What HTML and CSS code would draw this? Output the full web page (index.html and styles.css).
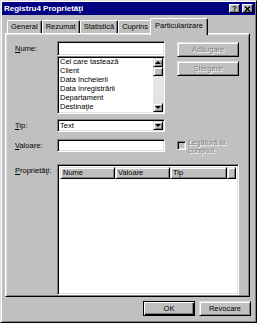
FILE: index.html
```html
<!DOCTYPE html>
<html lang="ro">
<head>
    <meta charset="utf-8">
    <title>Registru4 Proprietăţi</title>
    <link rel="stylesheet" href="styles.css">
</head>
<body>
<div class="window">
    <div class="titlebar">
        <span class="title">Registru4 Proprietăţi</span>
        <div class="title-buttons">
            <span class="tbtn">?</span>
            <span class="tbtn">
                <svg width="7" height="6" viewBox="0 0 7 6">
                    <path d="M1 0.5 L6 5.5 M6 0.5 L1 5.5" stroke="#000" stroke-width="1.5"/>
                </svg>
            </span>
        </div>
    </div>

    <div class="tabs">
        <span class="tab">General</span>
        <span class="tab">Rezumat</span>
        <span class="tab">Statistică</span>
        <span class="tab">Cuprins</span>
        <span class="tab active">Particularizare</span>
    </div>

    <div class="panel">
        <!-- Nume -->
        <div class="row">
            <span class="lbl lbl-15"><u>N</u>ume:</span>
            <div class="field-col">
                <div class="sunken input"></div>
                <div class="sunken listbox">
                    <ul class="items">
                        <li>Cel care tastează</li>
                        <li>Client</li>
                        <li>Data încheierii</li>
                        <li>Data înregistrării</li>
                        <li>Departament</li>
                        <li>Destinaţie</li>
                    </ul>
                    <div class="scrollbar">
                        <span class="raised sb-btn"><i class="arrow up"></i></span>
                        <span class="raised sb-thumb"></span>
                        <span class="sb-track"></span>
                        <span class="raised sb-btn"><i class="arrow down"></i></span>
                    </div>
                </div>
            </div>
            <div class="side-col">
                <button class="raised btn disabled">Adăugare</button>
                <button class="raised btn disabled">Ştergere</button>
            </div>
        </div>

        <!-- Tip -->
        <div class="row row-tip">
            <span class="lbl lbl-13"><u>T</u>ip:</span>
            <div class="field-col">
                <div class="sunken combo">
                    <span class="combo-text">Text</span>
                    <span class="raised drop"><i class="arrow down"></i></span>
                </div>
            </div>
        </div>

        <!-- Valoare -->
        <div class="row row-val">
            <span class="lbl lbl-13"><u>V</u>aloare:</span>
            <div class="field-col">
                <div class="sunken input small"></div>
            </div>
            <div class="side-col check-row">
                <span class="sunken checkbox"></span>
                <span class="disabled check-text">Legătură la conţinut</span>
            </div>
        </div>

        <!-- Proprietăţi -->
        <div class="row row-props">
            <span class="lbl lbl-14"><u>P</u>roprietăţi:</span>
            <div class="sunken listview">
                <div class="lv-head">
                    <span class="raised col col-name">Nume</span>
                    <span class="raised col col-val">Valoare</span>
                    <span class="raised col col-type">Tip</span>
                    <span class="raised col col-rest"></span>
                </div>
            </div>
        </div>
    </div>

    <div class="footer">
        <button class="raised btn wide default">OK</button>
        <button class="raised btn wide">Revocare</button>
    </div>
</div>
</body>
</html>
```

FILE: styles.css
```css
*{
    box-sizing: border-box;
}
body{
    margin: 0;
    background: #c0c0c0;
    font-family: "Liberation Sans", Arial, sans-serif;
    font-size: 7.5px;
    color: #000;
}
.window{
    width: 257px;
    height: 323px;
    padding: 1px;
    background: #c0c0c0;
    border: 1px solid;
    border-color: #dfdfdf #000 #000 #dfdfdf;
    box-shadow: inset 1px 1px #fff, inset -1px -1px #808080;
}
/* Title bar */
.titlebar{
    height: 13px;
    background: #000080;
    color: #fff;
    display: flex;
    align-items: center;
    justify-content: space-between;
    padding: 0 2px;
}
.title{
    font-weight: bold;
    font-size: 8px;
}
.title-buttons{
    display: flex;
    gap: 2px;
}
.tbtn{
    width: 11px;
    height: 9px;
    background: #c0c0c0;
    border: 1px solid;
    border-color: #fff #000 #000 #fff;
    box-shadow: inset -1px -1px #808080;
    display: flex;
    align-items: center;
    justify-content: center;
    color: #000;
    font-weight: bold;
    font-size: 8px;
    line-height: 7px;
}
/* Tabs */
.tabs{
    display: flex;
    align-items: flex-end;
    height: 15px;
    margin: 3px 5px 0 3px;
    padding-left: 2px;
    position: relative;
    z-index: 1;
}
.tab{
    height: 13px;
    padding: 1px 3px 0;
    line-height: 10px;
    white-space: nowrap;
    background: #c0c0c0;
    border: 1px solid;
    border-bottom: 0;
    border-color: #fff #000 #000 #fff;
    border-radius: 2px 2px 0 0;
    box-shadow: inset -1px 0 #808080;
}
.tab.active{
    height: 17px;
    padding: 2px 4px 0;
    margin: 0 -2px -2px;
}
/* Panel */
.panel{
    margin: 0 5px 0 3px;
    padding: 7px 0 1px 9px;
    border: 1px solid;
    border-color: #fff #000 #000 #fff;
    box-shadow: inset 1px 1px #dfdfdf, inset -1px -1px #808080;
}
.row{
    display: flex;
    align-items: flex-start;
}
.row-tip{
    margin-top: 5px;
}
.row-val{
    margin-top: 7px;
}
.row-props{
    margin-top: 9px;
}
.lbl{
    width: 42px;
    white-space: nowrap;
}
.lbl-15{ line-height: 15px; }
.lbl-13{ line-height: 13px; }
.lbl-14{ line-height: 14px; }
.field-col{
    width: 108px;
    display: flex;
    flex-direction: column;
}
.side-col{
    width: 62px;
    margin-left: 12px;
    display: flex;
    flex-direction: column;
    gap: 4px;
    padding-top: 1px;
}
/* 3D borders */
.sunken{
    background: #fff;
    border: 1px solid;
    border-color: #808080 #fff #fff #808080;
    box-shadow: inset 1px 1px #000, inset -1px -1px #dfdfdf;
}
.raised{
    background: #c0c0c0;
    border: 1px solid;
    border-color: #dfdfdf #000 #000 #dfdfdf;
    box-shadow: inset 1px 1px #fff, inset -1px -1px #808080;
}
.input{
    height: 15px;
}
.input.small{
    height: 13px;
}
/* List box */
.listbox{
    height: 58px;
    display: flex;
}
.items{
    list-style: none;
    margin: 0;
    padding: 0 0 0 2px;
    flex: 1;
    line-height: 9px;
    white-space: nowrap;
    color: #000;
}
.scrollbar{
    width: 10px;
    margin: 1px 1px 1px 0;
    display: flex;
    flex-direction: column;
}
.sb-btn{
    height: 9px;
    display: flex;
    align-items: center;
    justify-content: center;
}
.sb-thumb{
    height: 9px;
}
.sb-track{
    flex: 1;
    background: #e4e4e4;
}
.arrow{
    display: block;
    width: 0;
    height: 0;
    border-left: 3px solid transparent;
    border-right: 3px solid transparent;
}
.arrow.up{
    border-bottom: 3px solid #000;
}
.arrow.down{
    border-top: 3px solid #000;
}
/* Buttons */
.btn{
    height: 15px;
    width: 62px;
    padding: 0;
    font: inherit;
    color: #000;
}
.btn.wide{
    width: 52px;
}
.btn.default{
    border: 1px solid #000;
    box-shadow: inset 1px 1px #fff, inset -1px -1px #000, inset -2px -2px #808080;
}
.disabled{
    color: #808080;
    text-shadow: 1px 1px #fff;
}
/* Combo */
.combo{
    height: 13px;
    display: flex;
    align-items: center;
}
.combo-text{
    flex: 1;
    padding-left: 2px;
}
.drop{
    width: 10px;
    height: 9px;
    margin-right: 1px;
    display: flex;
    align-items: center;
    justify-content: center;
}
/* Checkbox */
.check-row{
    flex-direction: row;
    gap: 2px;
    padding-top: 0;
}
.checkbox{
    width: 9px;
    height: 9px;
    margin-top: 2px;
    flex: none;
    background: #c0c0c0;
}
.check-text{
    line-height: 8px;
}
/* List view */
.listview{
    width: 182px;
    height: 131px;
    padding: 2px;
}
.lv-head{
    display: flex;
    height: 12px;
}
.col{
    line-height: 10px;
    padding-left: 2px;
    white-space: nowrap;
}
.col-name{ width: 55px; }
.col-val{ width: 55px; }
.col-type{ width: 57px; }
.col-rest{ flex: 1; }
/* Footer */
.footer{
    display: flex;
    justify-content: flex-end;
    gap: 4px;
    margin-top: 4px;
    padding-right: 4px;
}
```
